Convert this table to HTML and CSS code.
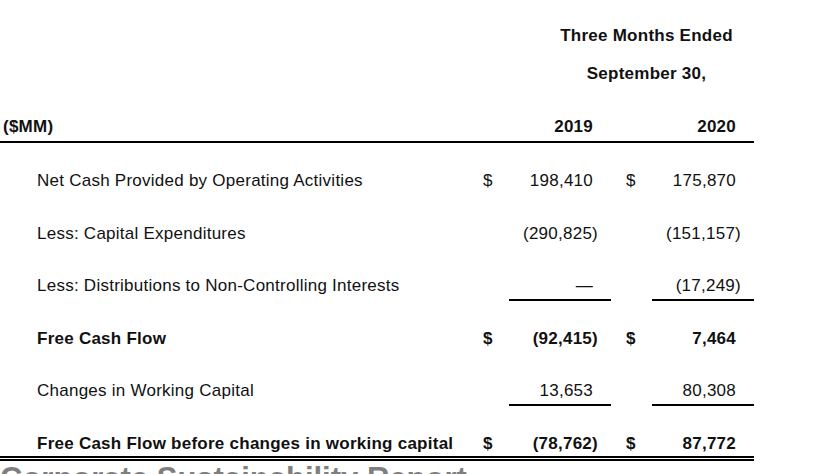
FILE: index.html
```html
<!DOCTYPE html>
<html lang="en">
<head>
<meta charset="utf-8">
<title>Free Cash Flow</title>
<link rel="stylesheet" href="styles.css">
</head>
<body>
<div class="sheet">
  <div class="row head">
    <div class="span">Three Months Ended</div>
  </div>
  <div class="row head">
    <div class="span">September 30,</div>
  </div>
  <div class="row years">
    <div class="label unit">($MM)</div>
    <div class="cur"></div>
    <div class="yr">2019</div>
    <div class="cur"></div>
    <div class="yr">2020</div>
  </div>

  <div class="row data">
    <div class="label">Net Cash Provided by Operating Activities</div>
    <div class="cur">$</div>
    <div class="num">198,410</div>
    <div class="cur c2">$</div>
    <div class="num">175,870</div>
  </div>
  <div class="row data">
    <div class="label">Less: Capital Expenditures</div>
    <div class="cur"></div>
    <div class="num neg">(290,825)</div>
    <div class="cur c2"></div>
    <div class="num neg">(151,157)</div>
  </div>
  <div class="row data">
    <div class="label">Less: Distributions to Non-Controlling Interests</div>
    <div class="cur"></div>
    <div class="num ul">&mdash;</div>
    <div class="cur c2"></div>
    <div class="num neg ul">(17,249)</div>
  </div>
  <div class="row data bold">
    <div class="label">Free Cash Flow</div>
    <div class="cur">$</div>
    <div class="num neg">(92,415)</div>
    <div class="cur c2">$</div>
    <div class="num">7,464</div>
  </div>
  <div class="row data">
    <div class="label">Changes in Working Capital</div>
    <div class="cur"></div>
    <div class="num ul">13,653</div>
    <div class="cur c2"></div>
    <div class="num ul">80,308</div>
  </div>
  <div class="row data bold total">
    <div class="label">Free Cash Flow before changes in working capital</div>
    <div class="cur">$</div>
    <div class="num neg">(78,762)</div>
    <div class="cur c2">$</div>
    <div class="num">87,772</div>
  </div>
  <div class="next">Corporate Sustainability Report</div>
</div>
</body>
</html>
```

FILE: styles.css
```css
html, body {
  margin: 0;
  padding: 0;
  overflow: hidden;
  background: #ffffff;
}

.sheet {
  width: 754px;
  padding-top: 17px;
  font-family: "Liberation Sans", Arial, sans-serif;
  font-size: 17px;
  line-height: 20px;
  letter-spacing: 0.25px;
  color: #111111;
}

.row {
  display: grid;
  grid-template-columns: 483px 26px 102px 41px 102px;
  box-sizing: border-box;
}

.head {
  height: 38px;
  align-items: center;
  font-weight: bold;
}

.head .span {
  grid-column: 2 / -1;
  text-align: center;
  padding-left: 56px;
}

.years {
  height: 50px;
  align-items: end;
  font-weight: bold;
  padding-bottom: 4px;
  border-bottom: 2px solid #000000;
}

.yr {
  text-align: right;
  padding-right: 18px;
}

.data {
  height: 52.5px;
}

.data > div {
  padding-top: 28px;
  box-sizing: border-box;
}

.label {
  padding-left: 37px;
  white-space: nowrap;
}

.years .unit {
  padding-left: 3px;
}

.cur {
  text-align: left;
}

.c2 {
  padding-left: 15px;
}

.num {
  text-align: right;
  padding-right: 18px;
}

.neg {
  padding-right: 13px;
}

.ul {
  border-bottom: 2px solid #000000;
}

.bold {
  font-weight: bold;
}

.total {
  height: 55px;
  border-bottom: 5px double #000000;
}

.next {
  margin-top: 2px;
  font-size: 31px;
  line-height: 32px;
  font-weight: bold;
  color: #7f7f7f;
  letter-spacing: 0;
  white-space: nowrap;
}
```
